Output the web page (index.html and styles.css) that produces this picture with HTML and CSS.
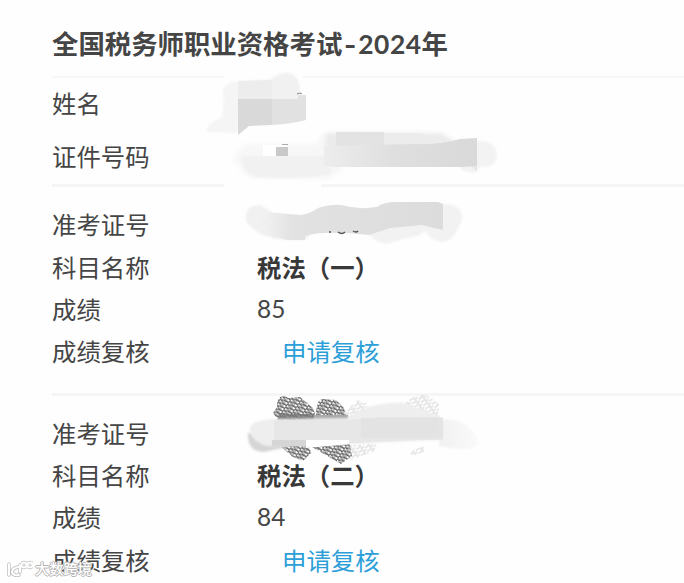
FILE: index.html
```html
<!DOCTYPE html>
<html lang="zh-CN">
<head>
<meta charset="utf-8">
<title>全国税务师职业资格考试</title>
<link rel="stylesheet" href="styles.css">
</head>
<body>
<main class="sheet">
  <h1 class="title">全国税务师职业资格考试<span class="dash">-</span><span class="year">2024</span>年</h1>
  <section class="person">
    <div class="row"><span class="label">姓名</span></div>
    <div class="row"><span class="label">证件号码</span></div>
  </section>
  <section class="subject">
    <div class="row"><span class="label">准考证号</span></div>
    <div class="row"><span class="label">科目名称</span><span class="value strong">税法（一）</span></div>
    <div class="row"><span class="label">成绩</span><span class="value num">85</span></div>
    <div class="row"><span class="label">成绩复核</span><a class="link">申请复核</a></div>
  </section>
  <section class="subject">
    <div class="row"><span class="label">准考证号</span></div>
    <div class="row"><span class="label">科目名称</span><span class="value strong">税法（二）</span></div>
    <div class="row"><span class="label">成绩</span><span class="value num">84</span></div>
    <div class="row"><span class="label">成绩复核</span><a class="link">申请复核</a></div>
  </section>

  <svg class="masks" viewBox="0 0 684 583" aria-hidden="true">
    <defs>
      <filter id="soft" x="-10%" y="-20%" width="120%" height="140%"><feGaussianBlur stdDeviation="0.8"/></filter>
      <filter id="softer" x="-10%" y="-30%" width="120%" height="160%"><feGaussianBlur stdDeviation="2"/></filter>
      <linearGradient id="bar" x1="0" x2="1"><stop offset="0" stop-color="#ededed"/><stop offset=".45" stop-color="#dfdfdf"/><stop offset="1" stop-color="#d9d9d9"/></linearGradient>
      <linearGradient id="bar2" x1="0" x2="1"><stop offset="0" stop-color="#f0f0f0"/><stop offset=".15" stop-color="#e2e2e2"/><stop offset="1" stop-color="#dcdcdc"/></linearGradient>
      <linearGradient id="tail" x1="0" x2="1"><stop offset="0" stop-color="#f1f1f1"/><stop offset="1" stop-color="#fafafa"/></linearGradient>
      <pattern id="hatch" width="9" height="3.500" patternUnits="userSpaceOnUse" patternTransform="rotate(34)">
        <path d="M0 1h6M5 2.800h4" stroke="#666" stroke-width="1.700"/>
        <path d="M0 2.500h3M7 1h2" stroke="#999" stroke-width="1"/>
      </pattern>
      <pattern id="faint" width="8" height="4" patternUnits="userSpaceOnUse" patternTransform="rotate(-36)">
        <path d="M0 1h6M4 3h4" stroke="#cfcfcf" stroke-width="1.200"/>
      </pattern>
    </defs>
    <!-- name -->
    <path fill="#fefefe" d="M224 73h78v10h-78zM224 180h97v10h-97z"/>
    <path fill="#f5f5f5" filter="url(#soft)" d="M206 132q1-9 16-15l2-18q-4-14 8-17l38-3q8-7 18-7 14 2 12 26l-58 8-5 27z"/>
    <path fill="#ededed" d="M238 81l34-1v19h-34z"/>
    <path fill="#f1f1f1" d="M272 80q14-10 22-4 7 6 5 23h-27z"/>
    <path fill="#d9d9d9" d="M238 99h34v26l-23 1-11 9z"/>
    <path fill="#e1e1e1" d="M272 99h26v-4h8v25q-15 4-34 5z"/>
    <path fill="none" stroke="#888" d="M297 94l3-1 2 1"/>
    <!-- document number -->
    <path fill="#f7f7f7" filter="url(#softer)" d="M231 160l14-16h70l8-10h30l-12 37-12 8-78-1q-12-5-13-15z"/>
    <path fill="#f1f1f1" filter="url(#soft)" d="M241 156h85l6 17q-22 7-77 4-12-5-14-21z"/>
    <path fill="#fff" d="M263 145h24v11h-24z"/>
    <path fill="#c9c9c9" d="M276 147h12v9h-12z"/>
    <path stroke="#aaa" d="M282 144.500h6"/>
    <path fill="#ebebeb" filter="url(#softer)" d="M326 133h115l18 11-20 6-113 4z"/>
    <path fill="#e3e3e3" d="M336 132h48v18h-48z"/>
    <path fill="#ececec" d="M384 133h35l22 6v12h-57z"/>
    <path fill="#f3f3f3" filter="url(#soft)" d="M476 141q19-2 21 14-1 13-17 12l-6 6q-13-1-14-7z"/>
    <path fill="url(#bar)" d="M324 146l91-2q26 1 45-5l17-1v28l-16 1H335l-11-1z"/>
    <path fill="#e8e8e8" d="M470 166h7v6z"/>
    <!-- first ticket number -->
    <path fill="#f1f1f1" filter="url(#soft)" d="M246 221q-2-16 14-16l12 7v25q-15-1-26-16z"/>
    <path fill="#eee" filter="url(#soft)" d="M260 219l58 7-13 14-32-1z"/>
    <path fill="#f2f2f2" filter="url(#soft)" d="M441 204q22-1 21 16-6 14-11 19-12 7-22-3-4-8-9-1l-24 6q-15 8-28-8l50-21z"/>
    <path fill="url(#bar2)" d="M266 212l34 3q10-1 18-7 13-4 23-3 17 5 36 2 7-5 18-5h43l5 2v26l-13-3-8-2-32 3-21 7q-46-5-64 1v4h-18l-21-7z"/>
    <path fill="none" stroke="#555" stroke-width="1.500" d="M330 231v2M338 232q4 3 7 0M353 231q3 2 5 0"/>
    <!-- second ticket number -->
    <path fill="url(#hatch)" d="M277 402l3-5 5-1 3 2 12-1 13 11 2 6-3 7h-33l-6-8 4-6zM318 402l4-3 14 1 8 8 3 12h-31v-9zM280 446h29l2 7-8 8-10-4zM312 447l38-3 2 12-11 8z"/>
    <path fill="url(#faint)" d="M344 412l14-12 10 4-5 16h-18zM403 406l8-8 14-4 14 10v14l-10 4zM346 446l30-3-1 8-24 9zM409 452l15-6v6l-12 4z"/>
    <path fill="#777" opacity=".8" d="M278 413l15 1h21v6h-35z"/>
    <path fill="#aaa" d="M314 415h34v5h-34z"/>
    <path fill="#eee" filter="url(#soft)" d="M348 417q25-16 55-14l36 13v6h-91z"/>
    <path fill="#d5d5d5" filter="url(#soft)" d="M248 433q-1 19 16 19l28-6h14v-11z"/>
    <path fill="url(#tail)" filter="url(#soft)" d="M440 419q33 0 39 25-8 9-40 2z"/>
    <path fill="#eee" filter="url(#soft)" d="M250 432q-3-10 19-13l170-2v23l-96 4-75 2q-14-2-18-14z"/>
    <path fill="#e3e3e3" d="M274 420h75l31-3h63v23h-27l-75 4h-53l-14-4z" opacity=".65"/>
    <path fill="#dedede" opacity=".45" d="M361 418h82v20h-82z"/>
    <path fill="#d6d6d6" d="M272 440h34v6h-34z"/>
    <path fill="#fefefe" d="M306 440h43v4l-43 4z"/>
  </svg>

  <div class="watermark">
    <svg class="mark" viewBox="0 0 26 18"><g fill="none" stroke="#bbb" stroke-width="3.400" stroke-linecap="round"><path d="M2 4v11M12 7q-7 1-7 5 1 4 7 3M13 5v7"/><circle cx="17" cy="5" r="2.500"/><circle cx="23" cy="5" r="2.500"/></g><g fill="none" stroke="#fff" stroke-width="2" stroke-linecap="round"><path d="M2 4v11M12 7q-7 1-7 5 1 4 7 3M13 5v7"/><circle cx="17" cy="5" r="2.500"/><circle cx="23" cy="5" r="2.500"/></g></svg>
    <span>大数跨境</span>
  </div>
</main>
</body>
</html>
```
FILE: styles.css
```css
* { box-sizing: border-box; }

body {
  margin: 0;
  background: #fefefe;
  color: #454545;
  font-family: "Noto Sans CJK SC", sans-serif;
}

.sheet {
  position: relative;
  height: 583px;
  padding: 20px 0 0 52px;
  overflow: hidden;
}

.title {
  height: 56px;
  margin: 0;
  font-size: 26.4px;
  font-weight: 700;
  line-height: 45px;
  white-space: nowrap;
}

.dash {
  display: inline-block;
  width: 16px;
  font-family: Inter, sans-serif;
  text-align: center;
}

.year {
  font-family: Lato, sans-serif;
  letter-spacing: 0.5px;
}

.person {
  height: 108px;
  border-top: 2px solid #f7f7f7;
}

.person .row {
  height: 53px;
  padding-bottom: 4px;
}

.subject {
  height: 208.5px;
  padding-top: 18px;
  border-top: 3px solid #f5f5f5;
}

.row {
  display: grid;
  grid-template-columns: 205px 1fr;
  align-items: center;
  height: 42.4px;
  padding-bottom: 4px;
  font-size: 24.4px;
  line-height: 36px;
}

.strong {
  color: #383838;
  font-weight: 700;
}

.num { font-family: Lato, sans-serif; }

.link {
  padding-left: 25px;
  color: #2c9fd8;
}

.masks {
  position: absolute;
  inset: 0;
  width: 684px;
  height: 583px;
}

.watermark {
  position: absolute;
  left: 7px;
  top: 557px;
  display: flex;
  align-items: center;
  gap: 2px;
  color: #fff;
  font-size: 14.2px;
  font-weight: 500;
  line-height: 23px;
  text-shadow: 1px 0 #b5b5b5, -1px 0 #b5b5b5, 0 1px #b5b5b5, 0 -1px #b5b5b5;
}

.mark {
  width: 26px;
  height: 18px;
}
```
